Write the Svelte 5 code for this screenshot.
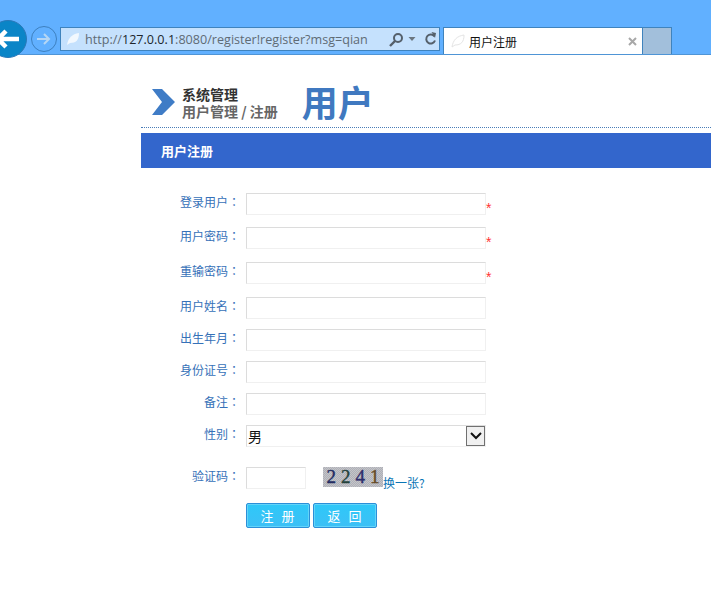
<script>
  const rows = [
    { label: '登录用户', required: true, gap: 12 },
    { label: '用户密码', required: true, gap: 13 },
    { label: '重输密码', required: true, gap: 13 },
    { label: '用户姓名', gap: 10 },
    { label: '出生年月', gap: 10 },
    { label: '身份证号', gap: 10 },
    { label: '备注', gap: 10 }
  ]
</script>

<div class="page">
  <div class="chrome">
    <div class="back">
      <svg width="30" height="24" viewBox="0 0 30 24"><path d="M26 12H5M13 4l-8 8 8 8" fill="none" stroke="#fff" stroke-width="4.5"/></svg>
    </div>
    <div class="forward">
      <svg width="16" height="14" viewBox="0 0 16 14"><path d="M1 7h12M8 2l5 5-5 5" fill="none" stroke="#b5d6f4" stroke-width="2"/></svg>
    </div>
    <div class="address">
      <svg class="leaf" width="14" height="14" viewBox="0 0 14 14"><path d="M1 13C2 6 6 2 13 1c0 7-3 10-9 10z" fill="#f2f8fe"/></svg>
      <span class="url">http://<b>127.0.0.1</b>:8080/register!register?msg=qian</span>
      <span class="tools">
        <svg width="15" height="15" viewBox="0 0 15 15"><circle cx="9" cy="6" r="4" fill="none" stroke="#55606b" stroke-width="2"/><path d="M6 9l-5 5" stroke="#55606b" stroke-width="2.4"/></svg>
        <svg width="8" height="4" viewBox="0 0 7 4"><path d="M0 0h7L3.500 4z" fill="#6b7680"/></svg>
        <svg class="reload" width="13" height="14" viewBox="0 0 13 14"><path d="M10.500 4.500a4.500 4.500 0 1 0 .5 4" fill="none" stroke="#55606b" stroke-width="2"/><path d="M7.500 0l4.500 1-1 5z" fill="#55606b"/></svg>
      </span>
    </div>
    <div class="tab">
      <svg class="leaf" width="14" height="14" viewBox="0 0 14 14"><path d="M1 13C2 6 6 2 13 1c0 7-3 10-9 10z" fill="none" stroke="#e4e4e4"/></svg>
      <span class="tab-title">用户注册</span>
      <svg class="close" width="9" height="9" viewBox="0 0 9 9"><path d="M1 1l7 7M8 1L1 8" stroke="#a8a8a8" stroke-width="2"/></svg>
    </div>
    <div class="new-tab"></div>
  </div>

  <main class="content">
    <header class="crumbs">
      <svg class="chevron" width="23" height="26" viewBox="0 0 23 26"><path d="M0 0h10l13 13-13 13H0l10-13z" fill="#3f7cc6"/></svg>
      <div class="crumb-text">
        <div class="crumb-top">系统管理</div>
        <div class="crumb-sub">用户管理 / 注册</div>
      </div>
      <div class="big-title">用户</div>
    </header>
    <div class="band">用户注册</div>

    <form class="form">
      {#each rows as row}
        <div class="row" style="margin-bottom: {row.gap}px">
          <span class="label">{row.label}<span class="colon">：</span></span>
          <input class="field" type="text" />
          {#if row.required}<span class="star">*</span>{/if}
        </div>
      {/each}
      <div class="row sex-row">
        <span class="label">性别<span class="colon">：</span></span>
        <span class="select-wrap">
          <select class="field select"><option>男</option></select>
          <span class="arrow">
            <svg width="12" height="8" viewBox="0 0 12 8"><path d="M1 1l5 5 5-5" fill="none" stroke="#111" stroke-width="2"/></svg>
          </span>
        </span>
      </div>
      <div class="row code-row">
        <span class="label">验证码<span class="colon">：</span></span>
        <input class="field code" type="text" />
        <span class="captcha"><i>2</i><i>2</i><i>4</i><i>1</i></span>
        <span class="change">换一张?</span>
      </div>
      <div class="buttons">
        <button type="button">注 册</button>
        <button type="button">返 回</button>
      </div>
    </form>
  </main>
</div>

<style>
  :global(body) {
    margin: 0;
    background: #fff;
  }
  .page {
    width: 711px;
    height: 590px;
    overflow: hidden;
    font-family: "Noto Sans CJK SC", "Liberation Sans", sans-serif;
  }
  .chrome {
    height: 54px;
    background: #61b0ff;
    border-bottom: 1px solid #4f95d6;
    display: flex;
    align-items: flex-end;
    position: relative;
  }
  .back {
    position: absolute;
    left: -11px;
    top: 20px;
    width: 38px;
    height: 38px;
    border-radius: 50%;
    background: #0a85c7;
    border: 1px solid #2a78b8;
    box-sizing: border-box;
    display: flex;
    align-items: center;
    justify-content: center;
  }
  .forward {
    position: absolute;
    left: 31px;
    top: 26px;
    width: 26px;
    height: 26px;
    border-radius: 50%;
    border: 1px solid #3d80bf;
    box-sizing: border-box;
    display: flex;
    align-items: center;
    justify-content: center;
  }
  .address {
    margin-left: 60px;
    margin-bottom: 3px;
    width: 380px;
    height: 24px;
    box-sizing: border-box;
    background: #c5e1fd;
    border: 1px solid #3f83bd;
    display: flex;
    align-items: center;
    padding-left: 5px;
    font-family: "Open Sans", "Liberation Sans", sans-serif;
    font-size: 12.6px;
    color: #5f6b75;
  }
  .leaf {
    flex: none;
  }
  .url {
    margin-left: 5px;
    white-space: nowrap;
    width: 296px;
    flex: none;
  }
  .url b {
    font-weight: 400;
    color: #20262c;
  }
  .tools {
    display: flex;
    align-items: center;
    gap: 4px;
    margin-left: 8px;
  }
  .reload {
    margin-left: 4px;
  }
  .tab {
    margin-left: 3px;
    width: 200px;
    height: 27px;
    box-sizing: border-box;
    background: #fff;
    border: 1px solid #3f83bd;
    border-bottom: 0;
    display: flex;
    align-items: center;
    padding-left: 7px;
    font-size: 12px;
    color: #111;
  }
  .tab-title {
    margin-left: 4px;
  }
  .close {
    margin-left: auto;
    margin-right: 5px;
  }
  .new-tab {
    width: 29px;
    height: 27px;
    box-sizing: border-box;
    background: #a2bfdb;
    border: 1px solid #3f83bd;
    border-left: 0;
    border-bottom: 0;
  }
  .content {
    margin-left: 141px;
  }
  .crumbs {
    height: 73px;
    box-sizing: border-box;
    border-bottom: 1px dotted #4a7db8;
    display: flex;
    align-items: flex-start;
    padding: 34px 0 0 11px;
  }
  .chevron {
    flex: none;
  }
  .crumb-text {
    margin-left: 7px;
    font-size: 14px;
    font-weight: 700;
    line-height: 17px;
    margin-top: -3px;
    white-space: nowrap;
  }
  .crumb-top {
    color: #333;
  }
  .crumb-sub {
    color: #666;
  }
  .big-title {
    margin-left: 24px;
    margin-top: -10px;
    font-size: 36px;
    line-height: 44px;
    font-weight: 700;
    color: #4079c0;
  }
  .band {
    height: 35px;
    margin-top: 5px;
    background: #3366cc;
    color: #fff;
    font-size: 13px;
    font-weight: 700;
    line-height: 35px;
    padding-left: 20px;
  }
  .form {
    padding-top: 25px;
  }
  .row {
    display: flex;
    align-items: flex-start;
    height: 22px;
  }
  .label {
    width: 99px;
    margin-right: 6px;
    box-sizing: border-box;
    text-align: right;
    font-size: 12px;
    line-height: 18px;
    color: #3671b8;
    white-space: nowrap;
  }
  .colon {
    font-family: "Noto Sans CJK TC", sans-serif;
  }
  .field {
    width: 240px;
    height: 22px;
    box-sizing: border-box;
    margin: 0;
    padding: 0;
    background: #fff;
    border: 1px solid;
    border-color: #dcdcdc #f0f0f0 #f0f0f0 #dcdcdc;
    outline: none;
  }
  .star {
    color: #f33;
    font-family: "Liberation Sans", sans-serif;
    font-size: 14px;
    line-height: 14px;
    margin-top: 8px;
  }
  .sex-row {
    margin-bottom: 20px;
  }
  .select-wrap {
    position: relative;
    display: block;
  }
  .select {
    display: block;
    appearance: none;
    padding: 0 0 2px 1px;
    border-radius: 0;
    font-family: "Noto Sans CJK SC", sans-serif;
    font-size: 14px;
    color: #111;
  }
  .arrow {
    position: absolute;
    right: 1px;
    top: 1px;
    width: 19px;
    height: 20px;
    box-sizing: border-box;
    background: #f0f0f0;
    border: 1px solid #707070;
    display: flex;
    align-items: center;
    justify-content: center;
  }
  .code-row {
    margin-bottom: 14px;
  }
  .code {
    width: 60px;
  }
  .captcha {
    margin-left: 17px;
    width: 60px;
    height: 20px;
    background: repeating-conic-gradient(#aeb0b8 0 25%, #c4c4c8 0 50%) 0 0 / 2px 2px;
    display: flex;
    justify-content: center;
    gap: 5px;
    font-family: "Liberation Serif", serif;
    font-size: 19px;
    line-height: 20px;
    color: #232c62;
    -webkit-text-stroke: 0.4px currentColor;
  }
  .captcha i {
    font-style: normal;
  }
  .captcha i:nth-child(2) {
    color: #24423c;
  }
  .captcha i:nth-child(3) {
    color: #2e2e6c;
  }
  .captcha i:nth-child(4) {
    color: #664a26;
  }
  .change {
    font-size: 12px;
    line-height: 16px;
    margin-top: 8px;
    color: #0a75b5;
  }
  .buttons {
    margin-left: 105px;
    display: flex;
    gap: 3px;
  }
  .buttons button {
    width: 64px;
    height: 25px;
    padding: 0;
    background: linear-gradient(#2fc8f8, #3cc0f6);
    border: 1px solid #2c8fd8;
    border-radius: 2px;
    box-shadow: inset 0 0 0 1px #62d4f9;
    color: #fff;
    font-family: "Noto Sans CJK SC", sans-serif;
    font-size: 13px;
    letter-spacing: 1px;
    word-spacing: 3px;
  }
</style>
